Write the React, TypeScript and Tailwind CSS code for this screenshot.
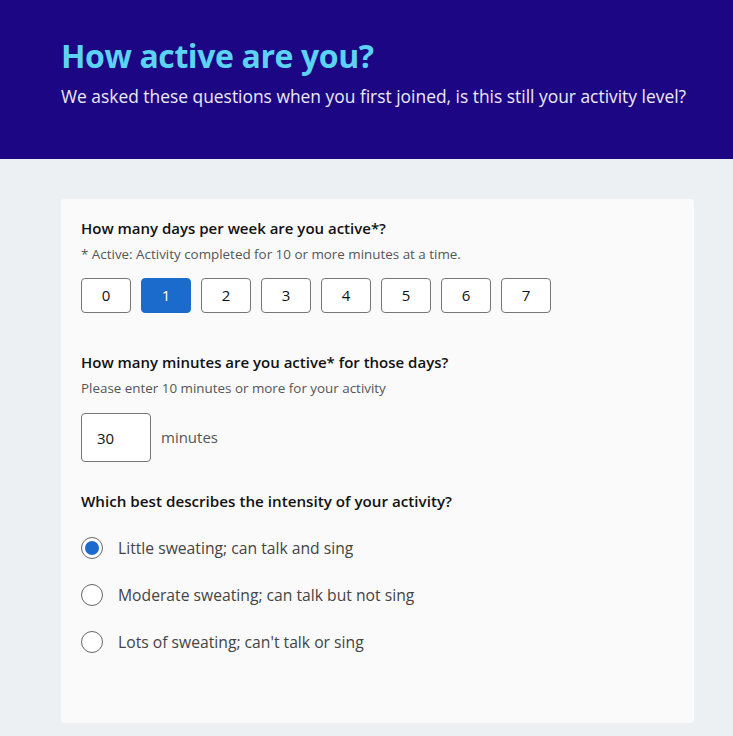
import { useState } from 'react';

const days = [0, 1, 2, 3, 4, 5, 6, 7];

const intensities = [
  'Little sweating; can talk and sing',
  'Moderate sweating; can talk but not sing',
  "Lots of sweating; can't talk or sing",
];

export default function App() {
  const [day, setDay] = useState(1);
  const [minutes, setMinutes] = useState('30');
  const [level, setLevel] = useState(0);

  return (
    <div className="min-h-[736px] bg-[#edf0f3] font-['Open_Sans',sans-serif]">
      <header className="h-[159px] bg-[#1d0683] pl-[61px] pr-[20px] pt-[36px]">
        <h1 className="text-[32px] font-bold leading-[40px] tracking-[-0.4px] text-[#5dd3f3]">How active are you?</h1>
        <p className="mt-[8px] whitespace-nowrap text-[17.4px] leading-[24px] text-[#eceaf6]">
          We asked these questions when you first joined, is this still your activity level?
        </p>
      </header>

      <main className="pl-[61px] pr-[39px] pt-[40px]">
        <div className="rounded-[4px] bg-[#fafafa] px-[20px] pb-[70px] pt-[18px] text-[#111]">
          <h2 className="text-[15px] font-semibold leading-[22px]">How many days per week are you active*?</h2>
          <p className="mt-[6px] text-[13.4px] leading-[18px] text-[#555]">
            * Active: Activity completed for 10 or more minutes at a time.
          </p>
          <div className="mt-[15px] flex gap-[10px]">
            {days.map((d) => (
              <button
                key={d}
                onClick={() => setDay(d)}
                className={
                  d === day
                    ? 'h-[35px] w-[50px] rounded-[4px] border border-[#1a6bcb] bg-[#1a6bcb] text-[15px] text-white'
                    : 'h-[35px] w-[50px] rounded-[4px] border border-[#767676] bg-white text-[15px] text-[#111]'
                }
              >
                {d}
              </button>
            ))}
          </div>

          <h2 className="mt-[38px] text-[15px] font-semibold leading-[22px]">
            How many minutes are you active* for those days?
          </h2>
          <p className="mt-[6px] text-[13.4px] leading-[18px] text-[#555]">Please enter 10 minutes or more for your activity</p>
          <div className="mt-[16px] flex items-center gap-[10px]">
            <input
              value={minutes}
              onChange={(e) => setMinutes(e.target.value)}
              className="h-[49px] w-[70px] rounded-[4px] border border-[#767676] bg-white px-[15px] text-[15px] text-[#111] outline-none"
            />
            <span className="text-[15px] text-[#555]">minutes</span>
          </div>

          <h2 className="mt-[28px] text-[15.2px] font-semibold leading-[22px]">
            Which best describes the intensity of your activity?
          </h2>
          <div className="mt-[25px] flex flex-col gap-[25px]">
            {intensities.map((label, i) => (
              <label key={label} className="flex cursor-pointer items-center gap-[15px]" onClick={() => setLevel(i)}>
                <span className="flex h-[22px] w-[22px] items-center justify-center rounded-full border border-[#666] bg-white">
                  {level === i && <span className="h-[14px] w-[14px] rounded-full bg-[#1a6bcb]" />}
                </span>
                <span className="text-[15.7px] leading-[22px] text-[#444]">{label}</span>
              </label>
            ))}
          </div>
        </div>
      </main>
    </div>
  );
}
